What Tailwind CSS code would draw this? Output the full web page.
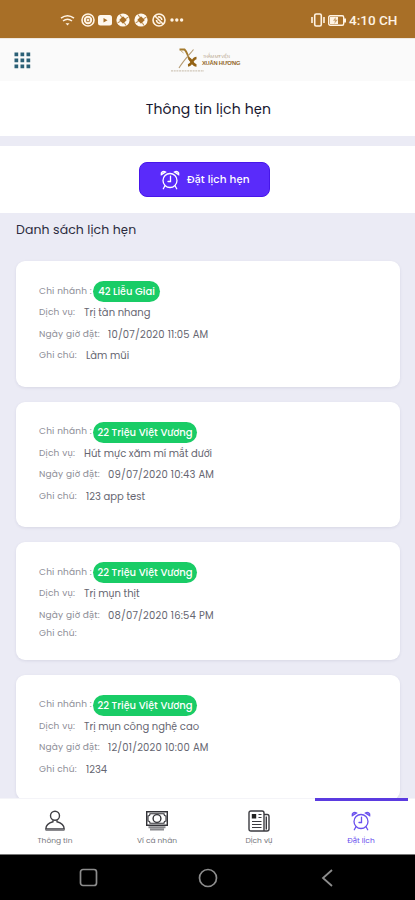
<!DOCTYPE html>
<html lang="vi">
<head>
<meta charset="utf-8">
<meta name="viewport" content="width=device-width, initial-scale=1">
<title>Thông tin lịch hẹn</title>
<script src="https://cdn.jsdelivr.net/npm/@tailwindcss/browser@4"></script>
</head>
<body class="font-['Poppins','Inter',sans-serif] bg-[#ebebf5]">
<svg class="hidden">
  <symbol id="clock" viewBox="0 0 20 20"><g fill="none" stroke="currentColor" stroke-width="1.3" stroke-linecap="round"><circle cx="10" cy="10.500" r="7"/><path d="M10.500 6.200v5.300H8M4.800 16l-1.500 2.700M15.200 16l1.500 2.700"/><path d="M1.300 4.800C.6 2 3.300.5 5.600 2zM18.700 4.800c.7-2.800-2-4.300-4.300-2.800z" fill="currentColor" fill-opacity=".6"/></g></symbol>
  <symbol id="spin" viewBox="0 0 14 14"><circle cx="7" cy="7" r="6.600" fill="#fff8ee"/><path d="M7 3.200L10.800 7 7 10.800 3.200 7z" fill="#a86f27"/><path d="M4.200 1.500l1.500 3M12.500 4.200l-3 1.500M9.800 12.500l-1.500-3M1.500 9.800l3-1.500" stroke="#a86f27" stroke-width=".9"/></symbol>
</svg>
<div class="w-[415px] h-[900px] overflow-hidden flex flex-col">
  <header class="h-[38px] shrink-0 bg-[#a86f27] flex items-center text-[#fff3e3] pl-[60px] pr-[18px] pt-[2px]">
    <svg class="w-[15px] h-[13px]" viewBox="0 0 15 13" fill="none" stroke="currentColor" stroke-width="1.5"><path d="M1 4.200q6.500-5 13 0M3 7q4.500-3.600 9 0"/><path d="M5.500 9.200h4L7.500 11.500z" fill="currentColor" stroke="none"/></svg>
    <svg class="w-[14px] h-[14px] ml-[6px]" viewBox="0 0 14 14" fill="none" stroke="currentColor"><circle cx="7" cy="7" r="6" stroke-width="1.600"/><circle cx="7" cy="7" r="3.200" stroke-width="2"/><circle cx="7" cy="7" r="1" fill="currentColor"/></svg>
    <svg class="w-[14px] h-[12px] ml-[3px]" viewBox="0 0 14 12"><rect y="1" width="14" height="10.500" rx="2.500" fill="#fff8ee"/><path d="M5.500 4v4.500l4-2.250z" fill="#a86f27"/></svg>
    <svg class="w-[14px] h-[14px] ml-[4px]"><use href="#spin"/></svg>
    <svg class="w-[14px] h-[14px] ml-[4px]"><use href="#spin"/></svg>
    <svg class="w-[14px] h-[14px] ml-[4px]" viewBox="0 0 14 14" fill="none" stroke="currentColor" stroke-width="1.600"><circle cx="7" cy="7" r="6"/><path d="M3 3l8 8M4.500 7a3 3 0 0 0 4 3M9.800 7a3 3 0 0 0-3.800-3"/></svg>
    <svg class="w-[14px] h-[4px] ml-[4px]" viewBox="0 0 14 4" fill="currentColor"><circle cx="2" cy="2" r="1.700"/><circle cx="6.800" cy="2" r="1.700"/><circle cx="11.600" cy="2" r="1.700"/></svg>
    <div class="ml-auto flex items-center">
      <svg class="w-[14px] h-[14px]" viewBox="0 0 14 14" fill="none" stroke="currentColor" stroke-width="1.600"><rect x="3.700" y="1" width="6.600" height="12" rx="1.500"/><path d="M1 4v6M13 4v6"/></svg>
      <svg class="w-[18px] h-[11px] ml-[3px]" viewBox="0 0 18 11"><rect x=".7" y=".7" width="15" height="9.600" rx="1.500" fill="none" stroke="currentColor" stroke-width="1.400"/><path d="M2 2h8v7H2zM16 3.500h2v4h-2z" fill="currentColor"/><path d="M7.500 2.200L5 5.800h2L6.200 9l3.600-4.300h-2z" fill="#a86f27" opacity=".6"/></svg>
      <span class="font-['Roboto',sans-serif] text-[13.500px] leading-[16px] font-medium ml-[3px] w-[48px] whitespace-nowrap">4:10 CH</span>
    </div>
  </header>

  <div class="h-[43px] shrink-0 bg-[#fafafa] flex items-center pl-[14px] border-t border-[#efe8df]">
    <svg class="w-[17px] h-[17px]" viewBox="0 0 17 17" fill="#2b6076"><path d="M.5.500h3.700v3.700H.5zM6.500.500h3.700v3.700H6.500zM12.500.500h3.700v3.700h-3.700zM.5 6.500h3.700v3.700H.5zM6.500 6.500h3.700v3.700H6.500zM12.500 6.500h3.700v3.700h-3.700zM.5 12.500h3.700v3.700H.5zM6.500 12.500h3.700v3.700H6.500zM12.500 12.500h3.700v3.700h-3.700z"/></svg>
    <div class="ml-[140px] flex items-center">
      <svg class="w-[33px] h-[26px]" viewBox="0 0 33 26" fill="none"><path d="M8.500 2.500h5q2 2 3 5 1.500 6 7.500 11" stroke="#a47a2d" stroke-width="1.900"/><path d="M9 3l3.500 3" stroke="#c0a878" stroke-width="1"/><path d="M22.500 2.500C18 8 12 14 8 21" stroke="#b59b73" stroke-width="1.100"/><path d="M17.500 11.500c3.500 0 3.500 7 8 7M25.500 11c-4.500 0-4 7-8.500 7.500" stroke="#946315" stroke-width="2.600"/><path d="M0 23.800h33" stroke="#cfc6b8" stroke-width="1.200" stroke-dasharray="2 .7"/></svg>
      <div class="-ml-[2px] pt-px whitespace-nowrap">
        <div class="text-[4.200px] leading-[5px] text-[#b9a88c] tracking-[-0.200px] pl-px">THẨM MỸ VIỆN</div>
        <div class="font-['Liberation_Sans',sans-serif] font-bold text-[5.800px] leading-[8px] text-[#94692a] tracking-[-0.250px]">XUÂN HƯƠNG</div>
      </div>
    </div>
  </div>

  <h1 class="h-[55px] shrink-0 bg-white text-center text-[14px] leading-[56px] tracking-[0.130px] pl-[2px] text-[#17172f]">Thông tin lịch hẹn</h1>

  <div class="mt-[10px] h-[67px] shrink-0 bg-white flex justify-center items-center">
    <button class="w-[131px] h-[35px] mr-[6px] rounded-[8px] bg-[#5a2bfa] border border-[#4716ea] text-white flex items-center pl-[20px]">
      <svg class="w-[20px] h-[20px]"><use href="#clock"/></svg>
      <span class="ml-[7px] text-[10.500px] font-medium tracking-[0.120px] whitespace-nowrap">Đặt lịch hẹn</span>
    </button>
  </div>

  <main class="flex-1 min-h-0 overflow-hidden px-[16px]">
    <h2 class="h-[48px] pt-[8px] text-[12.500px] leading-[18px] tracking-[0.080px] text-[#2b2b40]">Danh sách lịch hẹn</h2>
    <div id="cards" class="w-[384px] flex flex-col gap-[15px]"></div>
  </main>

  <nav class="h-[56px] shrink-0 bg-white flex border-t border-[#f4f4f8] text-[#77777e] pl-[4px] text-[7.500px] leading-[10px]">
    <a class="w-[102px] flex flex-col items-center pt-[11px] gap-[4px]">
      <svg class="w-[22px] h-[22px]" viewBox="0 0 22 22" fill="none" stroke="#404045" stroke-width="1.400"><circle cx="11" cy="5.800" r="4.500"/><path d="M9 10.200v1.600Q2 13.500 1.800 19h18.400Q20 13.500 13 11.800v-1.600"/><path d="M1.500 20.300h19" stroke="#8a8a8e"/></svg>
      <span>Thông tin</span>
    </a>
    <a class="w-[102px] flex flex-col items-center pt-[11px] gap-[4px]">
      <svg class="w-[24px] h-[22px]" viewBox="0 0 24 22" fill="none" stroke="#333338" stroke-width="1.400"><path d="M1.700 1.700h20.600v13.600H1.700z"/><path d="M5 3.800h14q0 2.200 2 2.200v5q-2 0-2 2.200H5Q5 11 3 11V6q2 0 2-2.200z" stroke-width="1.100"/><circle cx="12" cy="8.500" r="3.900"/><path d="M3.500 17.200h17M5 19.500h14" stroke="#88888c" stroke-width="1.900"/></svg>
      <span>Ví cá nhân</span>
    </a>
    <a class="w-[102px] flex flex-col items-center pt-[11px] gap-[4px]">
      <svg class="w-[22px] h-[22px]" viewBox="0 0 22 22" fill="none" stroke="#3b3b40" stroke-width="1.400"><path d="M1 3q0-2 2-2h11q2 0 2 2v18H3q-2 0-2-2zM16 4.500h3.200q1.800 0 1.800 2V19q0 2-2 2h-3M18.300 6.500v13"/><path d="M4.500 4.800h3v3h-3z" fill="#222" stroke="#222"/><path d="M10.500 4.500h3M10.500 7.500h3M4 11.500h9.500M4 14.500h9.500M4 17.500h9.500" stroke-width="1.200"/></svg>
      <span>Dịch vụ</span>
    </a>
    <a class="w-[102px] flex flex-col items-center text-[#6a50ee]">
      <span class="w-[93px] h-[3px] -mt-px bg-[#5b3be0]"></span>
      <svg class="w-[20px] h-[20px] mt-[10px]"><use href="#clock"/></svg>
      <span class="mt-[5px]">Đặt lịch</span>
    </a>
  </nav>

  <footer class="h-[46px] shrink-0 bg-black border-t border-[#777] flex items-center text-[#8d8d8d] pl-[79px]">
    <svg class="w-[19px] h-[19px]" viewBox="0 0 19 19" fill="none" stroke="currentColor" stroke-width="1.700"><rect x="1.500" y="1.500" width="16" height="16" rx="2.500"/></svg>
    <svg class="w-[20px] h-[20px] ml-[100px]" viewBox="0 0 20 20" fill="none" stroke="currentColor" stroke-width="1.700"><circle cx="10" cy="10" r="8.500"/></svg>
    <svg class="w-[12px] h-[18px] ml-[103px]" viewBox="0 0 12 18" fill="none" stroke="currentColor" stroke-width="1.800"><path d="M11 1L2 9l9 8"/></svg>
  </footer>
</div>
<script>
const items = [
  ['42 Liễu Giai','Trị tàn nhang','10/07/2020 11:05 AM','Làm mũi',126],
  ['22 Triệu Việt Vương','Hút mực xăm mí mắt dưới','09/07/2020 10:43 AM','123 app test',126],
  ['22 Triệu Việt Vương','Trị mụn thịt','08/07/2020 16:54 PM','',118],
  ['22 Triệu Việt Vương','Trị mụn công nghệ cao','12/01/2020 10:00 AM','1234',126]
];
const row = (label, gap, value, spacing) => `<div class="${value ? 'h-[21.5px]' : 'h-[15px]'} flex items-center"><span class="${gap} shrink-0 text-[9px] tracking-[0.200px] text-[#8d8d96]">${label}</span><span class="text-[10px] ${spacing} text-[#666671]">${value}</span></div>`;
document.getElementById('cards').innerHTML = items.map(([branch, service, date, note, height]) => `
  <section class="bg-white rounded-[9px] shadow-[0_1px_3px_rgba(80,80,120,0.12)] pt-[20px] pl-[23px] whitespace-nowrap shrink-0" style="height:${height - 0.5}px">
    <div class="h-[21px] flex items-center"><span class="w-[54px] shrink-0 text-[9px] tracking-[0.200px] text-[#8d8d96]">Chi nhánh :</span><span class="h-[21px] leading-[21px] rounded-full bg-[#19cc66] text-white text-[10px] font-medium ${branch[0] === '4' ? 'w-[67px]' : 'w-[104px]'} text-center">${branch}</span></div>
    ${row('Dịch vụ:', 'w-[45px]', service, '')}
    ${row('Ngày giờ đặt:', 'w-[69px]', date, 'tracking-[0.200px]')}
    ${row('Ghi chú:', 'w-[47px]', note, '')}
  </section>`).join('');
</script>
</body>
</html>
